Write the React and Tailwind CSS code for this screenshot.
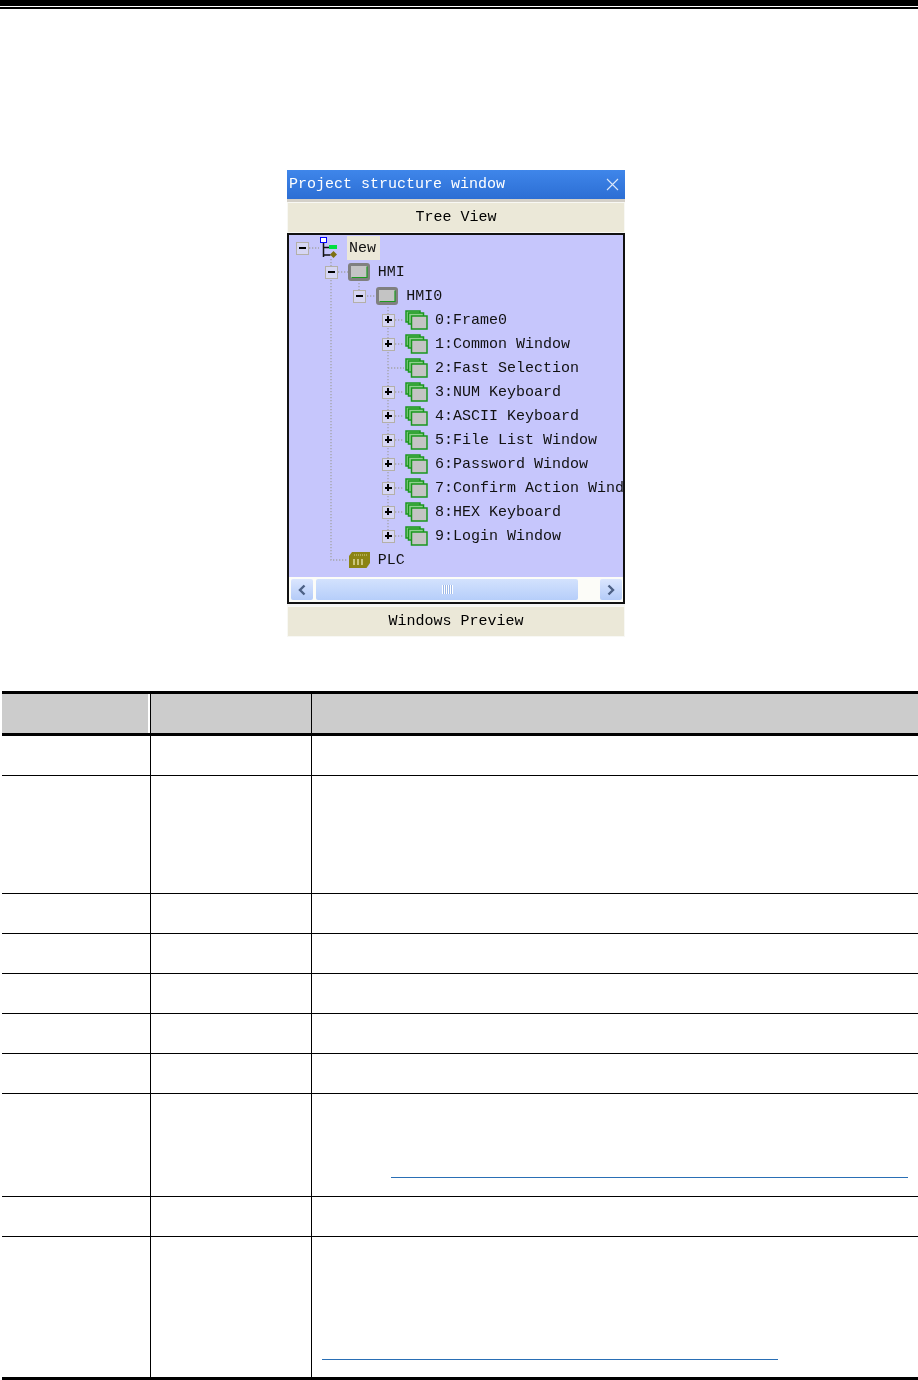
import React from 'react';

const treeRows = [
  { depth: 0, label: 'New', icon: 'root', toggle: '-', selected: true },
  { depth: 1, label: 'HMI', icon: 'hmi', toggle: '-' },
  { depth: 2, label: 'HMI0', icon: 'hmi', toggle: '-' },
  { depth: 3, label: '0:Frame0', icon: 'win', toggle: '+' },
  { depth: 3, label: '1:Common Window', icon: 'win', toggle: '+' },
  { depth: 3, label: '2:Fast Selection', icon: 'win' },
  { depth: 3, label: '3:NUM Keyboard', icon: 'win', toggle: '+' },
  { depth: 3, label: '4:ASCII Keyboard', icon: 'win', toggle: '+' },
  { depth: 3, label: '5:File List Window', icon: 'win', toggle: '+' },
  { depth: 3, label: '6:Password Window', icon: 'win', toggle: '+' },
  { depth: 3, label: '7:Confirm Action Window', icon: 'win', toggle: '+' },
  { depth: 3, label: '8:HEX Keyboard', icon: 'win', toggle: '+' },
  { depth: 3, label: '9:Login Window', icon: 'win', toggle: '+' },
  { depth: 1, label: 'PLC', icon: 'plc' },
];

const RootIcon = () => (
  <svg width="22" height="22" viewBox="0 0 22 22">
    <rect x="1.5" y="0.5" width="6" height="5" fill="#fff" stroke="#0000ff" />
    <path d="M4.5 6v14M4.5 10.5h6M4.5 18h7" stroke="#111" strokeWidth="1.5" fill="none" />
    <rect x="10" y="8" width="8" height="4" fill="#00e040" />
    <path d="M14.5 14l3.5 3.5-3.5 3.5-3.5-3.5z" fill="#7d7010" />
  </svg>
);

const HmiIcon = () => (
  <svg width="22" height="22" viewBox="0 0 22 22">
    <rect x="0" y="2" width="22" height="18" rx="3" fill="#808080" />
    <rect x="3" y="5" width="16" height="12" fill="#c4c4c4" />
    <path d="M3.5 16.5h15.5v-11" stroke="#1c9a20" strokeWidth="1.2" fill="none" />
  </svg>
);

const WinIcon = () => (
  <svg width="23" height="22" viewBox="0 0 23 22">
    <rect x="1" y="2" width="14" height="11" fill="#8fd08f" stroke="#1a961e" strokeWidth="1.5" />
    <rect x="3.5" y="4" width="15" height="11" fill="#8fd08f" stroke="#1a961e" strokeWidth="1.5" />
    <rect x="6.5" y="7" width="15.5" height="13" fill="#c4c4c4" stroke="#1a961e" strokeWidth="1.5" />
  </svg>
);

const PlcIcon = () => (
  <svg width="22" height="22" viewBox="0 0 22 22">
    <path d="M4 3h18v11l-3.5 5H1V7z" fill="#8c8414" />
    <path d="M6 6h14" stroke="#d8d490" strokeWidth="1.2" strokeDasharray="1 1" />
    <path d="M6 10v6M10 10v6M14 10v6" stroke="#e4e0a8" strokeWidth="1.4" />
  </svg>
);

const icons = { root: RootIcon, hmi: HmiIcon, win: WinIcon, plc: PlcIcon };

const Toggle = ({ type }) => (
  <div className="w-[13px] h-[13px] border-[1.5px] border-[#b4b0a8] bg-[#d6d6f4] flex items-center justify-center relative">
    <div className="w-[7px] h-[1.5px] bg-black shrink-0" />
    {type === '+' && <div className="w-[1.5px] h-[7px] bg-black absolute left-[4.25px] top-[1.5px]" />}
  </div>
);

const TreeRow = ({ row }) => {
  const Icon = icons[row.icon];
  return (
    <div className="h-[24px] flex items-center" style={{ paddingLeft: 7 + row.depth * 28.67 }}>
      <div className="w-[13px] h-[13px] shrink-0">{row.toggle && <Toggle type={row.toggle} />}</div>
      <div className="w-[10px] shrink-0" />
      <div className="w-[23px] shrink-0 flex items-center relative z-10"><Icon /></div>
      {row.selected ? (
        <div className="ml-[5px] h-[24px] leading-[25px] pl-[2px] pr-[4px] bg-[#ebe8d8] whitespace-nowrap -mt-[1px]">{row.label}</div>
      ) : (
        <div className="ml-[7px] mt-[1px] whitespace-nowrap">{row.label}</div>
      )}
    </div>
  );
};

const BarButton = ({ children }) => (
  <div className="h-[31px] bg-[#ebe8d8] border border-[#f8f8f4] flex items-center justify-center text-black">{children}</div>
);

const ProjectWindow = () => (
  <div className="w-[338px] mx-auto mt-[161px] font-['Liberation_Mono',monospace] text-[15px] leading-[24px] blur-[0.45px] translate-x-[-3px]">
    <div className="h-[29px] bg-gradient-to-b from-[#3f86ea] to-[#2c6ed4] text-white flex items-center justify-between pl-[2px] pr-[6px]">
      <span className="mt-[1px]">Project structure window</span>
      <svg width="13" height="13" viewBox="0 0 13 13"><path d="M1 1l11 11M12 1L1 12" stroke="#dce8fa" strokeWidth="1.1" /></svg>
    </div>
    <div className="h-[3px] bg-[#d4d0c8]" />
    <BarButton>Tree View</BarButton>
    <div className="h-[371px] border-2 border-[#111] bg-[#c6c6fc] flex flex-col overflow-hidden">
      <div className="flex-1 relative pt-[1px] text-[#111] overflow-hidden">
        {/* tree connector lines */}
        <svg className="absolute left-0 top-0" width="334" height="345" fill="none" stroke="#a4a4a8" strokeWidth="1.3" strokeDasharray="1.3 1.7">
          <path d="M20 13h10" />
          <path d="M42 24v301h17" />
          <path d="M49 37h10M70 48v14" />
          <path d="M78 61h10" />
          <path d="M99 72v229" />
          <path d="M106 85h9M106 109h9M99 133h16M106 157h9M106 181h9M106 205h9M106 229h9M106 253h9M106 277h9M106 301h9" />
        </svg>
        <div className="relative">
          {treeRows.map((row) => (
            <TreeRow key={row.label} row={row} />
          ))}
        </div>
      </div>
      <div className="h-[25px] bg-[#fcfcf8] flex items-center pl-[2px] pr-[1px] gap-[3px]">
        <div className="w-[22px] h-[21px] rounded-[2px] bg-gradient-to-b from-[#dbe6fe] to-[#b4cbf8] flex items-center justify-center">
          <svg width="10" height="12" viewBox="0 0 10 12"><path d="M7.5 1.5L3 6l4.5 4.5" stroke="#4d6185" strokeWidth="2.4" fill="none" /></svg>
        </div>
        <div className="w-[262px] h-[21px] rounded-[2px] bg-gradient-to-b from-[#d3e2fd] to-[#b6cefa] flex items-center justify-center">
          <div className="w-[11px] h-[9px] bg-[repeating-linear-gradient(90deg,#ffffff_0_1px,#9db8e8_1px_2px)]" />
        </div>
        <div className="flex-1" />
        <div className="w-[22px] h-[21px] rounded-[2px] bg-gradient-to-b from-[#dbe6fe] to-[#b4cbf8] flex items-center justify-center">
          <svg width="10" height="12" viewBox="0 0 10 12"><path d="M2.5 1.5L7 6l-4.5 4.5" stroke="#4d6185" strokeWidth="2.4" fill="none" /></svg>
        </div>
      </div>
    </div>
    <div className="h-[2px] bg-[#f4f4f4]" />
    <BarButton>Windows Preview</BarButton>
  </div>
);

const Row = ({ height, children }) => (
  <div className={`flex border-b border-black ${height}`}>
    <div className="w-[149px] border-r border-black" />
    <div className="w-[161px] border-r border-black" />
    <div className="flex-1">{children}</div>
  </div>
);

const ParamTable = () => (
  <div className="ml-[2px] mt-[54px]">
    <div className="h-[3px] bg-black" />
    <div className="flex h-[39px]">
      <div className="w-[149px] border-r border-black bg-white">
        <div className="w-[146px] h-full bg-[#cccccc]" />
      </div>
      <div className="w-[161px] border-r border-black bg-[#cccccc]" />
      <div className="flex-1 bg-[#cccccc]" />
    </div>
    <div className="h-[3px] bg-black" />
    <Row height="h-[40px]" />
    <Row height="h-[118px]" />
    <Row height="h-[40px]" />
    <Row height="h-[40px]" />
    <Row height="h-[40px]" />
    <Row height="h-[40px]" />
    <Row height="h-[40px]" />
    <Row height="h-[103px]">
      <div className="ml-[79px] mr-[10px] mt-[83px] h-px bg-[#2a6fb5]" />
    </Row>
    <Row height="h-[40px]" />
    <div className="flex h-[140px]">
      <div className="w-[149px] border-r border-black" />
      <div className="w-[161px] border-r border-black" />
      <div className="flex-1">
        <div className="ml-[10px] w-[456px] mt-[122px] h-px bg-[#2a6fb5]" />
      </div>
    </div>
    <div className="h-[3px] bg-black" />
  </div>
);

const App = () => (
  <div className="w-[918px] h-[1380px] bg-white overflow-hidden">
    <div className="h-[6px] bg-black" />
    <div className="h-[1px] bg-white" />
    <div className="h-[2px] bg-black" />
    <ProjectWindow />
    <ParamTable />
  </div>
);

export default App;
